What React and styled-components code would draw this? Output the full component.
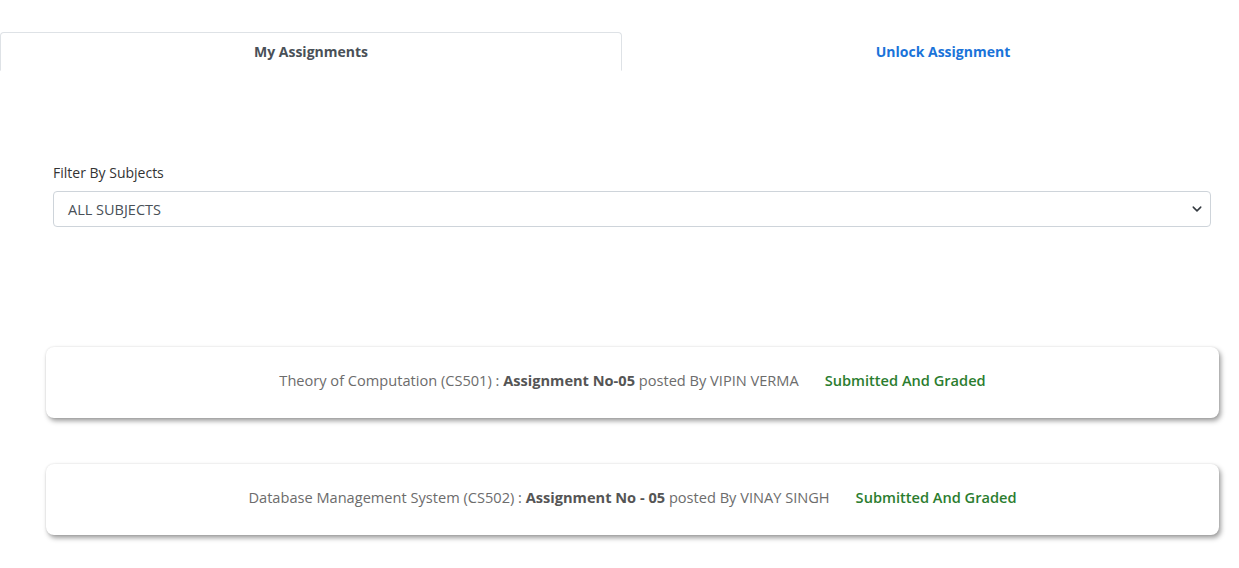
import React from "react";
import styled, { createGlobalStyle } from "styled-components";

const Global = createGlobalStyle`
  html, body { margin: 0; padding: 0; background: #fff; }
  body { font-family: "Open Sans", "Noto Sans", sans-serif; color: #212529; }
  * { box-sizing: border-box; }
`;

const Page = styled.div`
  padding-top: 32px;
  width: 1239px;
  min-height: 568px;
  overflow: hidden;
`;

const Tabs = styled.div`
  display: flex;
  width: 1264px;
  border-bottom: 1px solid #dee2e6;
`;

const Tab = styled.div`
  flex: 0 0 ${(p) => (p.$active ? "622px" : "642px")};
  height: 39px;
  margin-bottom: -1px;
  display: flex;
  align-items: center;
  justify-content: center;
  font-size: 14px;
  font-weight: 700;
  color: ${(p) => (p.$active ? "#495057" : "#1a73d9")};
  background: #fff;
  border: 1px solid ${(p) => (p.$active ? "#dee2e6" : "transparent")};
  border-bottom-color: ${(p) => (p.$active ? "#fff" : "transparent")};
  border-radius: 4px 4px 0 0;
`;

const FilterSection = styled.div`
  padding: 91px 28px 0 53px;
  display: flex;
  flex-direction: column;
  gap: 8px;
`;

const Label = styled.label`
  font-size: 14px;
  color: #333;
  line-height: 21px;
`;

const SelectBox = styled.div`
  height: 36px;
  border: 1px solid #ced4da;
  border-radius: 4px;
  display: flex;
  align-items: center;
  justify-content: space-between;
  padding: 0 8px 0 14px;
  font-size: 14.5px;
  color: #495057;
`;

const CardList = styled.div`
  padding: 120px 20px 0 46px;
  display: flex;
  flex-direction: column;
  gap: 46px;
`;

const Card = styled.div`
  height: 71px;
  padding-bottom: 6px;
  border-radius: 8px;
  background: #fff;
  box-shadow: 2px 3px 5px rgba(0, 0, 0, 0.38), 0 0 2px rgba(0, 0, 0, 0.12);
  display: flex;
  align-items: center;
  justify-content: center;
  font-size: 14.6px;
  color: #6c6c6c;
`;

const Strong = styled.b`
  color: #555;
  font-weight: 700;
`;

const Status = styled.span`
  margin-left: 26px;
  color: #2b7d2f;
  font-weight: 600;
`;

const Chevron = () => (
  <svg width="10" height="10" viewBox="0 0 16 16">
    <path d="M2 5l6 6 6-6" fill="none" stroke="#343a40" strokeWidth="2.4" strokeLinecap="round" strokeLinejoin="round" />
  </svg>
);

const items = [
  { subject: "Theory of Computation (CS501) : ", no: "Assignment No-05", by: " posted By VIPIN VERMA" },
  { subject: "Database Management System (CS502) : ", no: "Assignment No - 05", by: " posted By VINAY SINGH" },
];

export default function App() {
  return (
    <Page>
      <Global />
      <Tabs>
        <Tab $active>My Assignments</Tab>
        <Tab>Unlock Assignment</Tab>
      </Tabs>
      <FilterSection>
        <Label>Filter By Subjects</Label>
        <SelectBox>
          <span>ALL SUBJECTS</span>
          <Chevron />
        </SelectBox>
      </FilterSection>
      <CardList>
        {items.map((it, i) => (
          <Card key={i}>
            <span>
              {it.subject}
              <Strong>{it.no}</Strong>
              {it.by}
            </span>
            <Status>Submitted And Graded</Status>
          </Card>
        ))}
      </CardList>
    </Page>
  );
}
